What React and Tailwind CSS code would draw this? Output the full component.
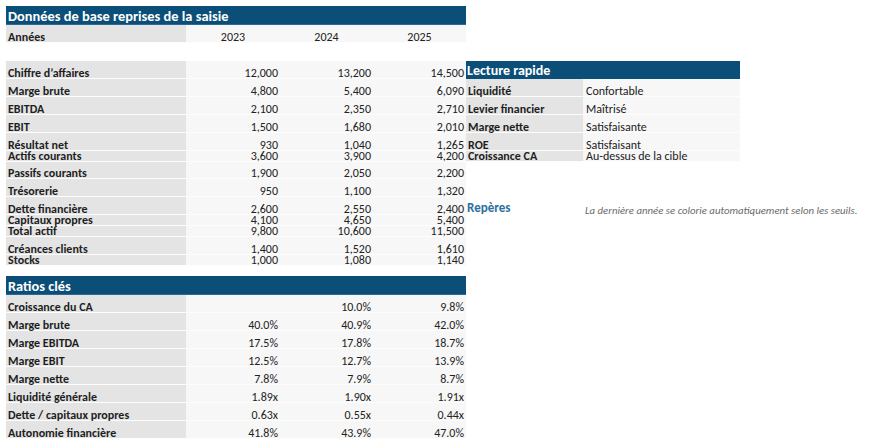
import React from "react";

const LABEL_BG = "bg-[#e4e4e4]";
const VAL_BG = "bg-[#f7f7f7]";

const topRows = [
  { label: "Années", vals: ["2023", "2024", "2025"], h: "h-[18px]", center: true },
  { blank: true, h: "h-[18px]" },
  { label: "Chiffre d’affaires", vals: ["12,000", "13,200", "14,500"], h: "h-[18px]", right: { type: "header", text: "Lecture rapide" } },
  { label: "Marge brute", vals: ["4,800", "5,400", "6,090"], h: "h-[18px]", right: { type: "kv", k: "Liquidité", v: "Confortable" } },
  { label: "EBITDA", vals: ["2,100", "2,350", "2,710"], h: "h-[18px]", right: { type: "kv", k: "Levier financier", v: "Maîtrisé" } },
  { label: "EBIT", vals: ["1,500", "1,680", "2,010"], h: "h-[18px]", right: { type: "kv", k: "Marge nette", v: "Satisfaisante" } },
  { label: "Résultat net", vals: ["930", "1,040", "1,265"], h: "h-[18px]", right: { type: "kv", k: "ROE", v: "Satisfaisant" } },
  { label: "Actifs courants", vals: ["3,600", "3,900", "4,200"], h: "h-[11px]", right: { type: "kv", k: "Croissance CA", v: "Au-dessus de la cible" } },
  { label: "Passifs courants", vals: ["1,900", "2,050", "2,200"], h: "h-[17px]" },
  { label: "Trésorerie", vals: ["950", "1,100", "1,320"], h: "h-[18px]" },
  { label: "Dette financière", vals: ["2,600", "2,550", "2,400"], h: "h-[18px]", right: { type: "note" } },
  { label: "Capitaux propres", vals: ["4,100", "4,650", "5,400"], h: "h-[11px]" },
  { label: "Total actif", vals: ["9,800", "10,600", "11,500"], h: "h-[11px]", clip: true },
  { label: "Créances clients", vals: ["1,400", "1,520", "1,610"], h: "h-[18px]" },
  { label: "Stocks", vals: ["1,000", "1,080", "1,140"], h: "h-[11px]" },
];

const ratios = [
  ["Croissance du CA", "", "10.0%", "9.8%"],
  ["Marge brute", "40.0%", "40.9%", "42.0%"],
  ["Marge EBITDA", "17.5%", "17.8%", "18.7%"],
  ["Marge EBIT", "12.5%", "12.7%", "13.9%"],
  ["Marge nette", "7.8%", "7.9%", "8.7%"],
  ["Liquidité générale", "1.89x", "1.90x", "1.91x"],
  ["Dette / capitaux propres", "0.63x", "0.55x", "0.44x"],
  ["Autonomie financière", "41.8%", "43.9%", "47.0%"],
];

function Cell({ children, className = "", align = "right" }) {
  const j = align === "right" ? "justify-end pr-[2px]" : align === "center" ? "justify-center" : "justify-start pl-[2px]";
  return (
    <div className={`flex items-end ${j} h-full border-b border-[#fdfdfd] whitespace-nowrap ${className}`}>
      <span className="leading-[12px] mb-[-1px]">{children}</span>
    </div>
  );
}

function Right({ right }) {
  if (!right) return null;
  if (right.type === "header") {
    return (
      <div className="w-[274px] h-full bg-[#0b4e77] flex items-end pl-[1px]">
        <span className="text-white font-bold text-[14px] leading-[14px] pb-[1px]">{right.text}</span>
      </div>
    );
  }
  if (right.type === "kv") {
    return (
      <div className="w-[274px] h-full flex">
        <Cell className={`w-[117px] ${LABEL_BG} font-bold text-[#1e1e1e]`} align="left">{right.k}</Cell>
        <Cell className={`w-[157px] ${VAL_BG} text-[#222]`} align="left">
          <span className="pl-[1px]">{right.v}</span>
        </Cell>
      </div>
    );
  }
  return (
    <div className="h-full flex items-end">
      <div className="w-[119px] pl-[1px] text-[#2e6f9e] font-bold text-[13px] leading-[13px] mb-[1px]">Repères</div>
      <div className="mb-[-1px] text-[#6b6b6b] italic text-[10.8px] leading-[10px] whitespace-nowrap">
        La dernière année se colorie automatiquement selon les seuils.
      </div>
    </div>
  );
}

function TopRow({ row }) {
  if (row.blank) return <div className={row.h} />;
  return (
    <div className={`flex ${row.h} ${row.clip ? "overflow-hidden" : ""}`}>
      <Cell className={`w-[180px] ${LABEL_BG} font-bold text-[#1e1e1e]`} align="left">{row.label}</Cell>
      {row.vals.map((v, i) => (
        <Cell
          key={i}
          className={`${i === 0 ? "w-[94px]" : "w-[93px]"} ${VAL_BG} text-[#222]`}
          align={row.center ? "center" : "right"}
        >
          {v}
        </Cell>
      ))}
      <Right right={row.right} />
    </div>
  );
}

function Bar({ text }) {
  return (
    <div className="w-[460px] h-[19px] bg-[#0b4e77] flex items-end pl-[2px] border-b border-[#2c6a91]">
      <span className="text-white font-bold text-[14.4px] leading-[14px] pb-[1px]">{text}</span>
    </div>
  );
}

export default function App() {
  return (
    <div
      className="w-[869px] h-[443px] bg-white overflow-hidden pl-[6px] pt-[6px] text-[12px] text-[#222]"
      style={{ fontFamily: "Carlito, Calibri, Lato, 'Open Sans', sans-serif" }}
    >
      <Bar text="Données de base reprises de la saisie" />
      <div className="flex flex-col">
        {topRows.map((r, i) => (
          <TopRow key={i} row={r} />
        ))}
      </div>
      <div className="h-[10px]" />
      <Bar text="Ratios clés" />
      <div className="flex flex-col">
        {ratios.map((r, i) => (
          <div key={i} className="flex h-[18px]">
            <Cell className={`w-[180px] ${LABEL_BG} font-semibold text-[#1e1e1e]`} align="left">{r[0]}</Cell>
            {r.slice(1).map((v, j) => (
              <Cell key={j} className={`${j === 0 ? "w-[94px]" : "w-[93px]"} ${VAL_BG} text-[#222]`}>
                {v}
              </Cell>
            ))}
          </div>
        ))}
      </div>
    </div>
  );
}
